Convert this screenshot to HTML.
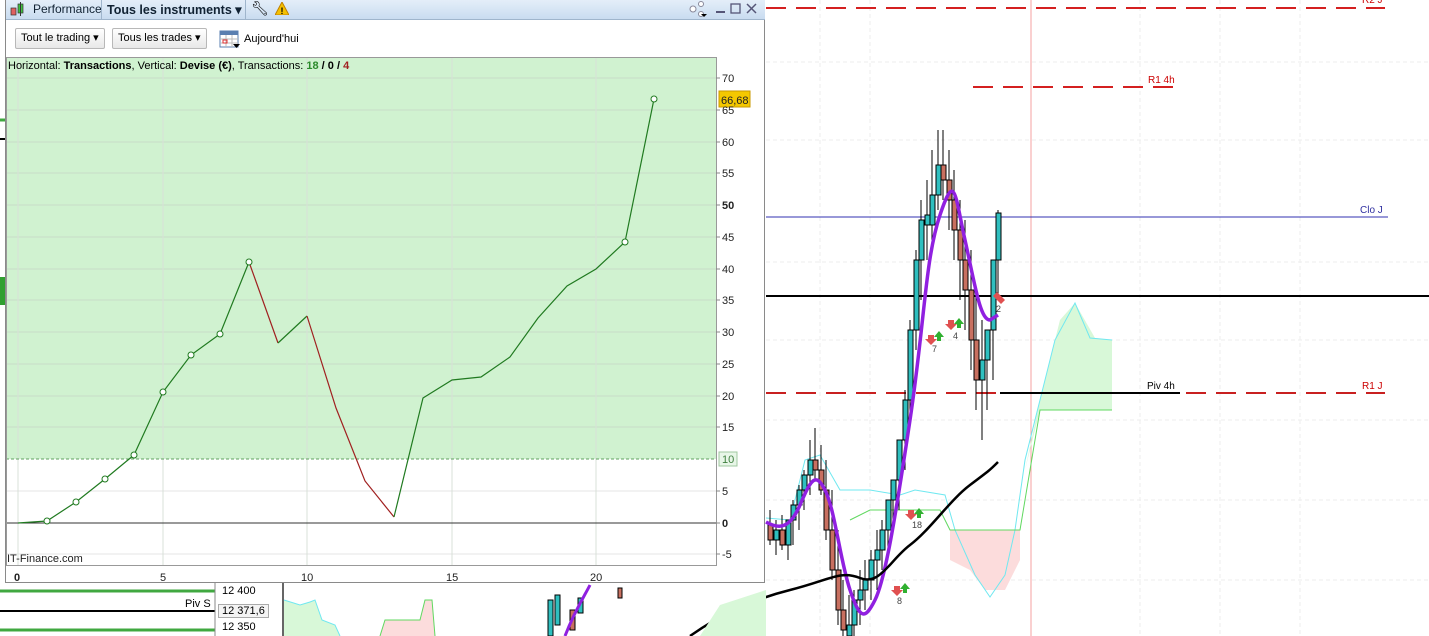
<!DOCTYPE html>
<html><head><meta charset="utf-8"><style>
body{margin:0;width:1429px;height:636px;overflow:hidden;background:#fff;font-family:"Liberation Sans",sans-serif;position:relative}
.a{position:absolute}
.t{font-size:11px;color:#000;white-space:nowrap}
.btn{position:absolute;top:28px;height:19px;border:1px solid #b8b8b8;border-radius:2px;background:linear-gradient(#fff,#e8e8e8);font-size:11px;line-height:19px;padding:0 5px}
</style></head><body>
<svg class="a" style="left:0;top:0" width="1429" height="636">
<g stroke="#eee" stroke-dasharray="4,3">
<line x1="766" y1="62" x2="1429" y2="62"/><line x1="766" y1="140" x2="1429" y2="140"/><line x1="766" y1="262" x2="1429" y2="262"/><line x1="766" y1="340" x2="1429" y2="340"/><line x1="766" y1="420" x2="1429" y2="420"/><line x1="766" y1="500" x2="1429" y2="500"/><line x1="766" y1="580" x2="1429" y2="580"/>
<line x1="820" y1="0" x2="820" y2="636"/><line x1="870" y1="0" x2="870" y2="636"/><line x1="1140" y1="0" x2="1140" y2="636"/><line x1="1220" y1="0" x2="1220" y2="636"/><line x1="1300" y1="0" x2="1300" y2="636"/>
</g>
<line x1="1031" y1="0" x2="1031" y2="636" stroke="#f4a0a0"/>
<polygon points="950,530 1020,530 1020,560 1005,590 985,590 970,570 950,560" fill="#fcdcdc"/>
<polygon points="1025,470 1040,410 1112,410 1112,340 1095,338 1075,303 1060,320 1040,400" fill="#d8f8d8"/>
<polyline points="766,518 790,520 805,460 820,455 840,490 870,490 900,495 915,490 945,495 955,530 975,575 990,597 1005,575 1015,530 1025,460 1040,400 1055,340 1075,303 1090,338 1112,340" fill="none" stroke="#70e8f0"/>
<polyline points="850,520 870,510 940,510 950,530 1020,530 1040,410 1112,410" fill="none" stroke="#60d860"/>
<line x1="766" y1="8" x2="1385" y2="8" stroke="#d42020" stroke-width="2" stroke-dasharray="20,10"/>
<line x1="973" y1="87" x2="1175" y2="87" stroke="#d42020" stroke-width="2" stroke-dasharray="20,10"/>
<line x1="766" y1="217" x2="1388" y2="217" stroke="#3030b0"/>
<line x1="766" y1="296" x2="1429" y2="296" stroke="#000" stroke-width="2"/>
<line x1="766" y1="393" x2="1385" y2="393" stroke="#c82020" stroke-width="2" stroke-dasharray="20,10"/>
<line x1="1000" y1="393" x2="1180" y2="393" stroke="#000" stroke-width="2"/>
<g stroke="#000" stroke-width="1">
<path d="M770,510V545M776,520V555M782,515V550M788,525V560M793,500V545M799,485V530M804,470V510M810,440V495M815,428V480M821,445V495M826,460V540M832,490V580M838,530V625M843,580V636M849,595V636M854,590V636M860,570V625M865,560V610M871,550V600M877,530V590M882,520V570M888,510V560M893,480V530M899,440V510M905,390V470M910,320V420M916,250V350M921,200V300M927,180V260M932,150V240M938,130V210M943,130V200M949,150V230M954,170V260M960,200V300M965,220V330M971,250V370M976,290V410M982,320V440M987,330V410M993,280V380M998,210V300"/>
</g>
<g stroke="#000" stroke-width="1">
<rect x="768" y="525" width="5" height="15" fill="#c87060"/><rect x="774" y="530" width="5" height="10" fill="#2fbfbf"/><rect x="780" y="530" width="5" height="15" fill="#c87060"/><rect x="786" y="520" width="5" height="25" fill="#2fbfbf"/><rect x="791" y="505" width="5" height="15" fill="#2fbfbf"/><rect x="797" y="490" width="5" height="15" fill="#2fbfbf"/><rect x="802" y="475" width="5" height="15" fill="#2fbfbf"/><rect x="808" y="460" width="5" height="15" fill="#2fbfbf"/><rect x="813" y="460" width="5" height="10" fill="#c87060"/><rect x="819" y="470" width="5" height="20" fill="#c87060"/><rect x="824" y="490" width="5" height="40" fill="#c87060"/><rect x="830" y="530" width="5" height="40" fill="#c87060"/><rect x="836" y="570" width="5" height="40" fill="#c87060"/><rect x="841" y="610" width="5" height="20" fill="#c87060"/><rect x="847" y="625" width="5" height="11" fill="#2fbfbf"/><rect x="852" y="600" width="5" height="25" fill="#2fbfbf"/><rect x="858" y="590" width="5" height="10" fill="#2fbfbf"/><rect x="863" y="580" width="5" height="10" fill="#2fbfbf"/><rect x="869" y="560" width="5" height="20" fill="#2fbfbf"/><rect x="875" y="550" width="5" height="10" fill="#2fbfbf"/><rect x="880" y="530" width="5" height="20" fill="#2fbfbf"/><rect x="886" y="500" width="5" height="30" fill="#2fbfbf"/><rect x="891" y="480" width="5" height="20" fill="#2fbfbf"/><rect x="897" y="440" width="5" height="40" fill="#2fbfbf"/><rect x="903" y="400" width="5" height="40" fill="#2fbfbf"/><rect x="908" y="330" width="5" height="70" fill="#2fbfbf"/><rect x="914" y="260" width="5" height="70" fill="#2fbfbf"/><rect x="919" y="220" width="5" height="40" fill="#2fbfbf"/><rect x="925" y="215" width="5" height="10" fill="#2fbfbf"/><rect x="930" y="195" width="5" height="30" fill="#2fbfbf"/><rect x="936" y="165" width="5" height="30" fill="#2fbfbf"/><rect x="941" y="165" width="5" height="15" fill="#c87060"/><rect x="947" y="180" width="5" height="20" fill="#c87060"/><rect x="952" y="200" width="5" height="30" fill="#c87060"/><rect x="958" y="230" width="5" height="30" fill="#c87060"/><rect x="963" y="260" width="5" height="30" fill="#c87060"/><rect x="969" y="290" width="5" height="50" fill="#c87060"/><rect x="974" y="340" width="5" height="40" fill="#c87060"/><rect x="980" y="360" width="5" height="20" fill="#2fbfbf"/><rect x="985" y="330" width="5" height="30" fill="#2fbfbf"/><rect x="991" y="260" width="5" height="70" fill="#2fbfbf"/><rect x="996" y="213" width="5" height="47" fill="#2fbfbf"/>
</g>
<path d="M766,522 C780,530 790,528 800,505 S815,470 825,490 S840,560 850,590 S865,620 875,600 S895,520 910,420 S925,260 940,215 S955,195 965,240 S980,320 990,320 L998,315" fill="none" stroke="#9020e0" stroke-width="3.5"/>
<path d="M690,636 C720,615 750,600 790,590 S840,570 860,578 S890,560 910,545 S950,500 970,485 S990,470 998,462" fill="none" stroke="#000" stroke-width="2.5"/>
<g font-size="9" fill="#444" font-family="Liberation Sans"><text x="932" y="352">7</text><text x="953" y="339">4</text><text x="912" y="528">18</text><text x="897" y="604">8</text><text x="996" y="312">2</text></g>
<g fill="#e05050"><path d="M928,335h6v4h3l-6,6-6-6h3z"/><path d="M948,320h6v4h3l-6,6-6-6h3z"/><path d="M908,510h6v4h3l-6,6-6-6h3z"/><path d="M894,586h6v4h3l-6,6-6-6h3z"/><path d="M997,292l8,8-4,4-8-8z"/></g>
<g fill="#30b030"><path d="M937,341v-4h-3l5-6 5,6h-3v4z"/><path d="M957,328v-4h-3l5-6 5,6h-3v4z"/><path d="M917,518v-4h-3l5-6 5,6h-3v4z"/><path d="M903,593v-4h-3l5-6 5,6h-3v4z"/></g>
<line x1="0" y1="591" x2="215" y2="591" stroke="#40a840" stroke-width="3"/>
<line x1="0" y1="611" x2="215" y2="611" stroke="#000" stroke-width="2"/>
<line x1="0" y1="630" x2="215" y2="630" stroke="#40a840" stroke-width="3"/>
<line x1="215" y1="583" x2="215" y2="636" stroke="#888"/>
<line x1="283" y1="583" x2="283" y2="636" stroke="#666" stroke-width="2"/>
<polygon points="284,600 300,605 315,600 322,620 335,625 340,636 284,636" fill="#d8f8d8"/>
<polyline points="284,600 300,605 310,602 315,600 322,620 335,625 340,636" fill="none" stroke="#70e8f0"/>
<polygon points="380,636 385,620 420,620 425,600 432,600 435,636" fill="#fcdcdc"/>
<polyline points="380,636 385,620 420,620 425,600 432,600 435,636" fill="none" stroke="#60d860"/>
<polygon points="700,636 720,605 766,590 766,636" fill="#d8f8d8"/>
<g stroke="#000"><rect x="548" y="600" width="5" height="36" fill="#2fbfbf"/><rect x="555" y="595" width="5" height="30" fill="#2fbfbf"/><rect x="570" y="610" width="5" height="20" fill="#c87060"/><rect x="578" y="598" width="5" height="15" fill="#2fbfbf"/><rect x="618" y="588" width="4" height="10" fill="#c87060"/></g>
<path d="M565,636 C575,610 585,595 590,585" fill="none" stroke="#9020e0" stroke-width="3"/>
<line x1="0" y1="120" x2="6" y2="120" stroke="#40a840" stroke-width="3"/>
<line x1="0" y1="139" x2="6" y2="139" stroke="#000" stroke-width="2"/>
<rect x="0" y="277" width="6" height="28" fill="#30a030"/>
</svg>
<div class="a t" style="left:1362px;top:-5px;color:#c00;font-size:10px">R2 J</div>
<div class="a t" style="left:1148px;top:75px;color:#c00;font-size:10px">R1 4h</div>
<div class="a t" style="left:1360px;top:205px;color:#3030a0;font-size:10px">Clo J</div>
<div class="a t" style="left:1147px;top:381px;font-size:10px">Piv 4h</div>
<div class="a t" style="left:1362px;top:381px;color:#c00;font-size:10px">R1 J</div>
<div class="a t" style="left:185px;top:598px;font-size:11px">Piv S</div>
<div class="a t" style="left:222px;top:585px;font-size:11px">12 400</div>
<div class="a t" style="left:218px;top:604px;font-size:11px;border:1px solid #aaa;background:#f4f4f4;padding:0 3px">12 371,6</div>
<div class="a t" style="left:222px;top:621px;font-size:11px">12 350</div>

<div class="a" style="left:5px;top:0;width:760px;height:583px;background:#fff;border:1px solid #8a8a8a;border-top:none;box-sizing:border-box">
<div class="a" style="left:0;top:0;width:759px;height:19px;background:linear-gradient(#e4eef9,#c9dcf0);border-bottom:1px solid #9fb5cc"></div>
</div>
<svg class="a" style="left:10px;top:2px" width="16" height="16"><rect x="1" y="6" width="5" height="7" fill="#e06060" stroke="#333" stroke-width=".7"/><rect x="8" y="2" width="5" height="9" fill="#40c040" stroke="#333" stroke-width=".7"/><line x1="10.5" y1="0" x2="10.5" y2="14" stroke="#333"/></svg>
<div class="a t" style="left:33px;top:2px;color:#123;font-size:12px">Performance</div>
<div class="a" style="left:101px;top:0;width:1px;height:19px;background:#9fb5cc"></div>
<div class="a t" style="left:107px;top:2px;font-weight:bold;font-size:12.5px;color:#123">Tous les instruments ▾</div>
<div class="a" style="left:245px;top:0;width:1px;height:19px;background:#9fb5cc"></div>
<div class="a t" style="left:251px;top:0px;font-size:14px">🔧︎</div>
<svg class="a" style="left:275px;top:2px" width="14" height="13"><polygon points="7,0 14,13 0,13" fill="#f4c000" stroke="#c08000"/><text x="5.5" y="12" font-size="9" font-weight="bold" fill="#000" font-family="Liberation Sans">!</text></svg>
<svg class="a" style="left:688px;top:1px" width="70" height="17"><g fill="#fff" stroke="#889"><circle cx="5" cy="8" r="3"/><circle cx="13" cy="3" r="2.5"/><circle cx="13" cy="13" r="2.5"/></g><path d="M13,13l6,0-3,3z" fill="#000"/><line x1="28" y1="11" x2="37" y2="11" stroke="#557" stroke-width="2"/><rect x="43" y="3" width="9" height="9" fill="none" stroke="#557" stroke-width="1.3"/><path d="M59,3l9,9M68,3l-9,9" stroke="#557" stroke-width="1.5"/></svg>
<div class="btn" style="left:15px">Tout le trading ▾</div>
<div class="btn" style="left:112px">Tous les trades ▾</div>
<svg class="a" style="left:219px;top:29px" width="22" height="20"><rect x="1" y="2" width="18" height="16" fill="#fff" stroke="#5a7fb0"/><rect x="1" y="2" width="18" height="4" fill="#5a7fb0"/><g stroke="#bbb"><line x1="1" y1="10" x2="19" y2="10"/><line x1="1" y1="14" x2="19" y2="14"/><line x1="7" y1="6" x2="7" y2="18"/><line x1="13" y1="6" x2="13" y2="18"/></g><rect x="4" y="11" width="4" height="3" fill="none" stroke="#e03030"/><path d="M14,15h7l-3.5,4z" fill="#000"/></svg>
<div class="a t" style="left:244px;top:33px">Aujourd'hui</div>

<svg class="a" style="left:6px;top:57px" width="759" height="526">
<rect x="0" y="0" width="710" height="402" fill="#d0f2d0"/>
<g stroke="#c8dcc8" stroke-width="1">
<line x1="0" y1="21" x2="710" y2="21"/><line x1="0" y1="53" x2="710" y2="53"/><line x1="0" y1="85" x2="710" y2="85"/><line x1="0" y1="116" x2="710" y2="116"/><line x1="0" y1="148" x2="710" y2="148"/><line x1="0" y1="180" x2="710" y2="180"/><line x1="0" y1="212" x2="710" y2="212"/><line x1="0" y1="243" x2="710" y2="243"/><line x1="0" y1="275" x2="710" y2="275"/><line x1="0" y1="307" x2="710" y2="307"/><line x1="0" y1="339" x2="710" y2="339"/><line x1="0" y1="370" x2="710" y2="370"/>
</g>
<g stroke="#e6e6e6"><line x1="0" y1="434" x2="710" y2="434"/><line x1="0" y1="497" x2="710" y2="497"/></g>
<g stroke="#d8e0d8"><line x1="12" y1="0" x2="12" y2="508"/><line x1="157" y1="0" x2="157" y2="508"/><line x1="301" y1="0" x2="301" y2="508"/><line x1="446" y1="0" x2="446" y2="508"/><line x1="590" y1="0" x2="590" y2="508"/></g>
<line x1="0" y1="402" x2="710" y2="402" stroke="#60a060" stroke-dasharray="3,2"/>
<line x1="0" y1="466" x2="710" y2="466" stroke="#333"/>
<rect x="0.5" y="0.5" width="710" height="508" fill="none" stroke="#999"/>
<g stroke="#888"><line x1="710" y1="21" x2="714" y2="21"/><line x1="710" y1="53" x2="714" y2="53"/><line x1="710" y1="85" x2="714" y2="85"/><line x1="710" y1="116" x2="714" y2="116"/><line x1="710" y1="148" x2="714" y2="148"/><line x1="710" y1="180" x2="714" y2="180"/><line x1="710" y1="212" x2="714" y2="212"/><line x1="710" y1="243" x2="714" y2="243"/><line x1="710" y1="275" x2="714" y2="275"/><line x1="710" y1="307" x2="714" y2="307"/><line x1="710" y1="339" x2="714" y2="339"/><line x1="710" y1="370" x2="714" y2="370"/><line x1="710" y1="434" x2="714" y2="434"/><line x1="710" y1="466" x2="714" y2="466"/><line x1="710" y1="497" x2="714" y2="497"/></g>
<polyline points="12,466 41,464 70,445 99,422 128,398 157,335 185,298 214,277 243,205" fill="none" stroke="#207a20" stroke-width="1.2"/>
<polyline points="243,205 272,286" fill="none" stroke="#a02020" stroke-width="1.2"/>
<polyline points="272,286 301,259" fill="none" stroke="#207a20" stroke-width="1.2"/>
<polyline points="301,259 330,351 359,424 388,460" fill="none" stroke="#a02020" stroke-width="1.2"/>
<polyline points="388,460 417,341 446,323 475,320 504,300 532,261 561,229 590,212 619,185 648,42" fill="none" stroke="#207a20" stroke-width="1.2"/>
<g fill="#fff" stroke="#207a20"><circle cx="41" cy="464" r="3"/><circle cx="70" cy="445" r="3"/><circle cx="99" cy="422" r="3"/><circle cx="128" cy="398" r="3"/><circle cx="157" cy="335" r="3"/><circle cx="185" cy="298" r="3"/><circle cx="214" cy="277" r="3"/><circle cx="243" cy="205" r="3"/><circle cx="619" cy="185" r="3"/><circle cx="648" cy="42" r="3"/></g>
<rect x="713" y="34" width="31" height="16" fill="#f4c800" stroke="#c89a00"/>
<rect x="713" y="395" width="18" height="14" fill="#e8f6e8" stroke="#a0c8a0"/>
<g font-family="Liberation Sans" font-size="11" fill="#222">
<text x="716" y="25">70</text><text x="716" y="57">65</text><text x="716" y="89">60</text><text x="716" y="120">55</text><text x="716" y="152" font-weight="bold">50</text><text x="716" y="184">45</text><text x="716" y="216">40</text><text x="716" y="247">35</text><text x="716" y="279">30</text><text x="716" y="311">25</text><text x="716" y="343">20</text><text x="716" y="374">15</text><text x="716" y="406" fill="#408040">10</text><text x="716" y="438">5</text><text x="716" y="470" font-weight="bold">0</text><text x="716" y="501">-5</text>
<text x="715" y="47">66,68</text>
<text x="8" y="524" font-weight="bold">0</text><text x="154" y="524">5</text><text x="295" y="524">10</text><text x="440" y="524">15</text><text x="584" y="524">20</text>
<text x="1" y="505">IT-Finance.com</text>
</g>
<text x="2" y="12" font-family="Liberation Sans" font-size="11" fill="#000">Horizontal: <tspan font-weight="bold">Transactions</tspan>, Vertical: <tspan font-weight="bold">Devise (€)</tspan>, Transactions: <tspan font-weight="bold" fill="#2a8a2a">18</tspan><tspan font-weight="bold"> / 0 / </tspan><tspan font-weight="bold" fill="#a02020">4</tspan></text>
</svg>
</body></html>
